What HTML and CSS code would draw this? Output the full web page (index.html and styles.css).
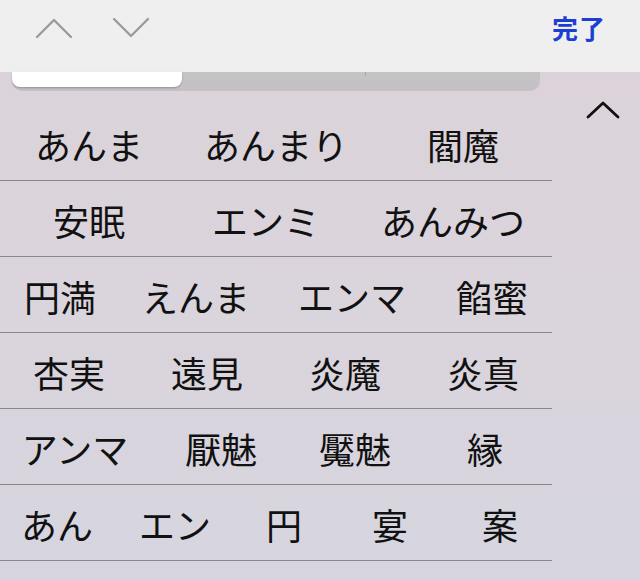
FILE: index.html
```html
<!DOCTYPE html>
<html lang="ja">
<head>
<meta charset="utf-8">
<link rel="stylesheet" href="styles.css">
</head>
<body>
<div class="screen">
  <div class="toolbar">
    <div class="arrows">
      <svg class="arrow" width="38" height="24" viewBox="0 0 38 24"><polyline points="2,21 19,4 36,21" fill="none" stroke="#9b9b9b" stroke-width="2.4" stroke-linecap="round" stroke-linejoin="round"/></svg>
      <svg class="arrow" width="38" height="24" viewBox="0 0 38 24"><polyline points="2,3 19,20 36,3" fill="none" stroke="#9b9b9b" stroke-width="2.4" stroke-linecap="round" stroke-linejoin="round"/></svg>
    </div>
    <div class="done">完了</div>
  </div>
  <div class="panel">
    <div class="main">
      <div class="segbar">
        <div class="seg seg-on"></div>
        <div class="seg seg-mid"></div>
        <div class="seg"></div>
      </div>
      <div class="rows">
        <div class="row r1"><span>あんま</span><span>あんまり</span><span>閻魔</span></div>
        <div class="row r2"><span>安眠</span><span>エンミ</span><span>あんみつ</span></div>
        <div class="row r3"><span>円満</span><span>えんま</span><span>エンマ</span><span>餡蜜</span></div>
        <div class="row r4"><span>杏実</span><span>遠見</span><span>炎魔</span><span>炎真</span></div>
        <div class="row r5"><span>アンマ</span><span>厭魅</span><span>魘魅</span><span>縁</span></div>
        <div class="row r6"><span>あん</span><span>エン</span><span>円</span><span>宴</span><span>案</span></div>
      </div>
    </div>
    <div class="side">
      <svg class="collapse" width="36" height="20" viewBox="0 0 36 20"><polyline points="3,17 18,3 33,17" fill="none" stroke="#111" stroke-width="2.8" stroke-linecap="round" stroke-linejoin="round"/></svg>
    </div>
  </div>
</div>
</body>
</html>
```

FILE: styles.css
```css
html, body {
  margin: 0;
  padding: 0;
}
body {
  width: 640px;
  height: 580px;
  overflow: hidden;
  font-family: "Noto Sans CJK JP", "Noto Sans", sans-serif;
}
.screen {
  width: 640px;
  height: 580px;
  display: flex;
  flex-direction: column;
}
.toolbar {
  height: 72px;
  background: #efefef;
  display: flex;
  align-items: center;
  justify-content: space-between;
  padding: 0 34px 0 35px;
  box-sizing: border-box;
  flex: none;
}
.arrows {
  display: flex;
  gap: 39px;
  margin-top: -16px;
}
.arrow {
  display: block;
}
.done {
  color: #1b3fd4;
  font-size: 26px;
  font-weight: 700;
  line-height: 1;
  margin-top: -16px;
  letter-spacing: 1px;
}
.panel {
  flex: 1;
  display: flex;
  background: linear-gradient(180deg, #dcd3da 0%, #dad4dc 50%, #d6d5df 100%);
}
.main {
  width: 552px;
  display: flex;
  flex-direction: column;
}
.segbar {
  margin-left: 12px;
  width: 528px;
  height: 19px;
  background: linear-gradient(180deg, #c4c4c4 0%, #c5c0c6 100%);
  border-radius: 0 0 10px 10px;
  display: flex;
  flex: none;
}
.seg {
  flex: 1;
}
.seg-on {
  flex: none;
  width: 170px;
  height: 15px;
  background: #ffffff;
  border-radius: 0 0 8px 8px;
  box-shadow: 0 1px 2px rgba(0,0,0,0.25);
}
.seg-mid {
  flex: none;
  width: 183px;
  border-right: 1px solid #a9a7ab;
  height: 4px;
}
.rows {
  margin-top: 14px;
  display: flex;
  flex-direction: column;
}
.row {
  height: 75px;
  border-bottom: 1px solid #8c878c;
  display: grid;
  align-items: center;
  font-size: 36px;
  color: #111;
  line-height: 1;
}
.row span {
  text-align: center;
  padding-top: 2px;
}
.r1 { grid-template-columns: 178px 196px 1fr; }
.r2 { grid-template-columns: 178px 176px 1fr; }
.r3 { grid-template-columns: 120px 152px 160px 1fr; }
.r4 { grid-template-columns: 1fr 1fr 1fr 1fr; }
.r5 { grid-template-columns: 150px 142px 126px 1fr; }
.r6 { grid-template-columns: 114px 122px 96px 116px 1fr; }
.side {
  flex: 1;
  display: flex;
  justify-content: center;
  align-items: flex-start;
  padding-top: 28px;
  padding-left: 14px;
}
.collapse {
  display: block;
}
```
